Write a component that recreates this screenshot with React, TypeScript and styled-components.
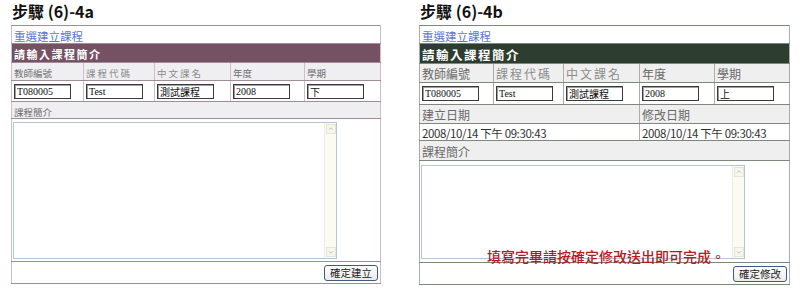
import styled, { createGlobalStyle } from "styled-components";

interface Theme {
  width: number;
  cols: number[];
  border: string;
  inner: string;
  head: string;
  label: string;
  labelColor: string;
  labelSize: number;
  headSize: number;
  areaHeight: number;
}

const themes: Record<"a" | "b", Theme> = {
  a: {
    width: 369,
    cols: [72, 71, 76, 74, 76],
    border: "#a38c99",
    inner: "#cdbfc8",
    head: "#745264",
    label: "#efeef1",
    labelColor: "#707070",
    labelSize: 9.5,
    headSize: 11,
    areaHeight: 137,
  },
  b: {
    width: 370,
    cols: [74, 70, 76, 75, 75],
    border: "#7d877d",
    inner: "#a8afa8",
    head: "#2d3d2f",
    label: "#efefef",
    labelColor: "#6a6a6a",
    labelSize: 12,
    headSize: 12.5,
    areaHeight: 94,
  },
};

const GlobalStyle = createGlobalStyle`
  body {
    margin: 0;
    background: #fff;
    font-family: "Noto Sans CJK TC", "Liberation Sans", sans-serif;
  }
`;

const Page = styled.div`
  display: flex;
  gap: 38px;
  padding-left: 11px;
  width: 800px;
  height: 295px;
  box-sizing: border-box;
`;

const Step = styled.section`
  position: relative;
  display: flex;
  flex-direction: column;
`;

const StepTitle = styled.h2`
  margin: 0;
  height: 25px;
  padding-left: 1px;
  font-size: 16px;
  line-height: 23px;
  font-weight: bold;
  color: #111;
`;

const Sheet = styled.table<{ $t: Theme }>`
  border-collapse: collapse;
  table-layout: fixed;
  width: ${(p) => p.$t.width}px;
  border: 1px solid ${(p) => p.$t.border};
`;

const Cell = styled.td<{ $t: Theme; $h: number; $bg?: string }>`
  height: ${(p) => p.$h}px;
  padding: 0 2px;
  border: 1px solid ${(p) => p.$t.inner};
  border-top-color: ${(p) => p.$t.border};
  border-bottom-color: ${(p) => p.$t.border};
  background: ${(p) => p.$bg ?? "#fff"};
  vertical-align: middle;
  white-space: nowrap;
  overflow: hidden;
  box-sizing: border-box;
  line-height: 12px;
`;

const LinkText = styled.a`
  font-size: 11.5px;
  line-height: 12px;
  color: #5a78cf;
  text-decoration: none;
`;

const HeadText = styled.span<{ $t: Theme }>`
  font-size: ${(p) => p.$t.headSize}px;
  line-height: 12px;
  font-weight: bold;
  color: #fff;
  letter-spacing: 1.5px;
`;

const Label = styled.span<{ $t: Theme; $spaced?: boolean }>`
  font-size: ${(p) => p.$t.labelSize}px;
  line-height: 12px;
  color: ${(p) => (p.$spaced ? "#8c8c8c" : p.$t.labelColor)};
  letter-spacing: ${(p) => (p.$spaced ? "2px" : "0")};
`;

const Value = styled.span`
  font-size: 11.5px;
  line-height: 12px;
  color: #333;
  letter-spacing: -0.4px;
`;

const Field = styled.input`
  display: block;
  width: 57px;
  height: 15px;
  box-sizing: border-box;
  margin: 0;
  padding: 0 2px;
  border: 1px solid #3a3a3a;
  box-shadow: inset 1px 1px 0 #a0a0a0;
  font-family: "Liberation Serif", "Noto Sans CJK TC", serif;
  font-size: 10px;
  line-height: 12px;
  color: #111;
  -webkit-text-fill-color: #111;
  background: #fff;
  outline: none;
`;

const TextBox = styled.div<{ $h: number }>`
  display: flex;
  justify-content: flex-end;
  width: 324px;
  height: ${(p) => p.$h}px;
  box-sizing: border-box;
  border: 1px solid #b3c6da;
  background: #fff;
`;

const ScrollBar = styled.div`
  display: flex;
  flex-direction: column;
  justify-content: space-between;
  width: 11px;
  padding: 1px 0;
  background: #fbfbf3;
  border-left: 1px solid #ecece2;
`;

const ScrollArrow = styled.svg`
  display: block;
  width: 10px;
  height: 10px;
  margin-left: 1px;
  border: 1px solid #e4e4da;
  box-sizing: border-box;
  background: #f6f6ee;
`;

const ButtonCell = styled.div`
  display: flex;
  justify-content: flex-end;
`;

const Submit = styled.button`
  width: 54px;
  height: 16px;
  padding: 0;
  border: 1px solid #3f5a7a;
  border-radius: 3px;
  background: linear-gradient(#ffffff, #ebebeb);
  font-family: "Noto Sans CJK TC", sans-serif;
  font-size: 10.5px;
  line-height: 13px;
  color: #222;
`;

const Note = styled.div`
  position: absolute;
  left: 68px;
  top: 247px;
  font-size: 14px;
  line-height: 18px;
  font-weight: 500;
  color: #b51a1f;
  white-space: nowrap;
`;

function Area({ h }: { h: number }) {
  return (
    <TextBox $h={h}>
      <ScrollBar>
        <ScrollArrow viewBox="0 0 10 10">
          <path d="M2.5 6 L5 3.5 L7.5 6" fill="none" stroke="#b8b8b0" strokeWidth="1" />
        </ScrollArrow>
        <ScrollArrow viewBox="0 0 10 10">
          <path d="M2.5 4 L5 6.5 L7.5 4" fill="none" stroke="#b8b8b0" strokeWidth="1" />
        </ScrollArrow>
      </ScrollBar>
    </TextBox>
  );
}

const labels = [
  { text: "教師編號", spaced: false },
  { text: "課程代碼", spaced: true },
  { text: "中文課名", spaced: true },
  { text: "年度", spaced: false },
  { text: "學期", spaced: false },
];

interface PanelProps {
  variant: "a" | "b";
  title: string;
  term: string;
  button: string;
  showDates?: boolean;
  rows: number[];
}

function Panel({ variant, title, term, button, showDates, rows }: PanelProps) {
  const t = themes[variant];
  const values = ["T080005", "Test", "測試課程", "2008", term];
  let r = 0;
  return (
    <Step>
      <StepTitle>{title}</StepTitle>
      <Sheet $t={t}>
        <colgroup>
          {t.cols.map((w, i) => (
            <col key={i} style={{ width: w }} />
          ))}
        </colgroup>
        <tbody>
          <tr>
            <Cell $t={t} $h={rows[r++]} colSpan={5}>
              <LinkText href="#">重選建立課程</LinkText>
            </Cell>
          </tr>
          <tr>
            <Cell $t={t} $h={rows[r++]} colSpan={5} $bg={t.head}>
              <HeadText $t={t}>請輸入課程簡介</HeadText>
            </Cell>
          </tr>
          <tr>
            {labels.map((l, i) => (
              <Cell key={l.text} $t={t} $h={i === 0 ? rows[r] : 0} $bg={t.label}>
                <Label $t={t} $spaced={l.spaced}>
                  {l.text}
                </Label>
              </Cell>
            ))}
          </tr>
          <tr>
            {values.map((v, i) => (
              <Cell key={i} $t={t} $h={i === 0 ? rows[++r] : 0}>
                <Field readOnly defaultValue={v} />
              </Cell>
            ))}
          </tr>
          {showDates && (
            <>
              <tr>
                <Cell $t={t} $h={rows[++r]} colSpan={3} $bg={t.label}>
                  <Label $t={t}>建立日期</Label>
                </Cell>
                <Cell $t={t} $h={0} colSpan={2} $bg={t.label}>
                  <Label $t={t}>修改日期</Label>
                </Cell>
              </tr>
              <tr>
                <Cell $t={t} $h={rows[++r]} colSpan={3}>
                  <Value>2008/10/14 下午 09:30:43</Value>
                </Cell>
                <Cell $t={t} $h={0} colSpan={2}>
                  <Value>2008/10/14 下午 09:30:43</Value>
                </Cell>
              </tr>
            </>
          )}
          <tr>
            <Cell $t={t} $h={rows[++r]} colSpan={5} $bg={t.label}>
              <Label $t={t}>課程簡介</Label>
            </Cell>
          </tr>
          <tr>
            <Cell $t={t} $h={rows[++r]} colSpan={5} style={{ padding: "0 1px" }}>
              <Area h={t.areaHeight} />
            </Cell>
          </tr>
          <tr>
            <Cell $t={t} $h={rows[++r]} colSpan={5}>
              <ButtonCell>
                <Submit type="button">{button}</Submit>
              </ButtonCell>
            </Cell>
          </tr>
        </tbody>
      </Sheet>
      {showDates && <Note>填寫完畢請按確定修改送出即可完成。</Note>}
    </Step>
  );
}

export default function App() {
  return (
    <>
      <GlobalStyle />
      <Page>
        <Panel
          variant="a"
          title="步驟 (6)-4a"
          term="下"
          button="確定建立"
          rows={[18, 19, 18, 21, 17, 143, 22]}
        />
        <Panel
          variant="b"
          title="步驟 (6)-4b"
          term="上"
          button="確定修改"
          showDates
          rows={[18, 20, 19, 22, 19, 17, 20, 102, 22]}
        />
      </Page>
    </>
  );
}
